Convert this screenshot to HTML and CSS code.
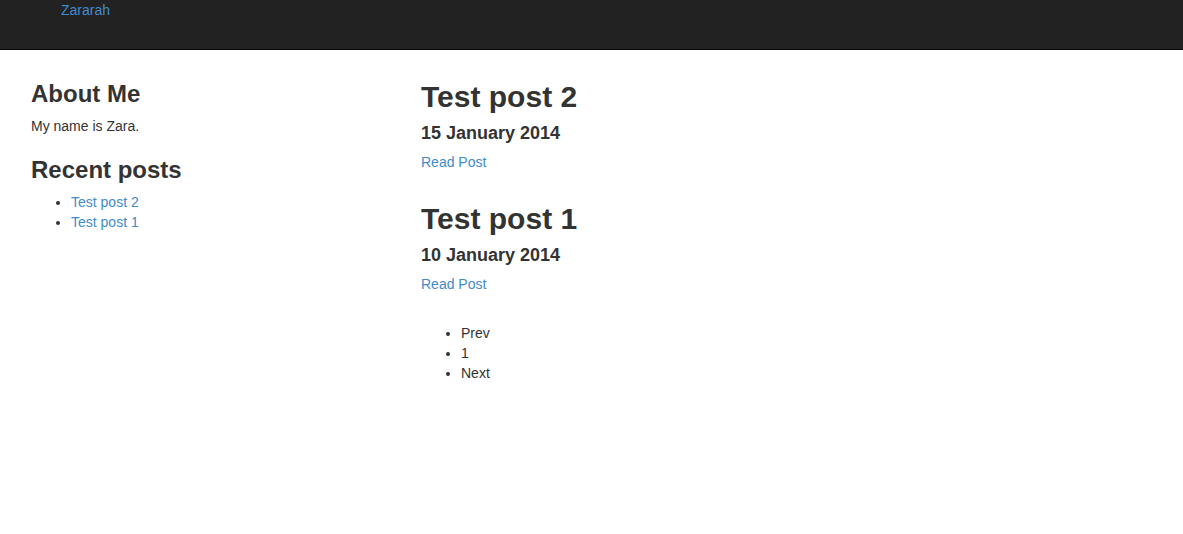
FILE: index.html
```html
<!DOCTYPE html>
<html lang="en">
<head>
<meta charset="utf-8">
<title>Zararah</title>
<link rel="stylesheet" href="styles.css">
</head>
<body>
<header class="navbar">
  <a class="brand" href="#">Zararah</a>
</header>
<div class="page">
  <aside class="sidebar">
    <h3>About Me</h3>
    <p>My name is Zara.</p>
    <h3>Recent posts</h3>
    <ul>
      <li><a href="#">Test post 2</a></li>
      <li><a href="#">Test post 1</a></li>
    </ul>
  </aside>
  <main class="content">
    <article class="post">
      <h2>Test post 2</h2>
      <h4>15 January 2014</h4>
      <p><a href="#">Read Post</a></p>
    </article>
    <article class="post">
      <h2>Test post 1</h2>
      <h4>10 January 2014</h4>
      <p><a href="#">Read Post</a></p>
    </article>
    <ul class="pager">
      <li>Prev</li>
      <li>1</li>
      <li>Next</li>
    </ul>
  </main>
</div>
</body>
</html>
```
FILE: styles.css
```css
html, body {
  margin: 0;
  padding: 0;
}
body {
  font-family: "Liberation Sans", Arial, Helvetica, sans-serif;
  font-size: 14px;
  line-height: 20px;
  color: #333333;
  background: #ffffff;
}
a {
  color: #428bca;
  text-decoration: none;
}
.navbar {
  height: 49px;
  background: #222222;
  border-bottom: 1px solid #080808;
  padding-left: 61px;
}
.brand {
  display: inline-block;
  line-height: 20px;
}
.page {
  display: grid;
  grid-template-columns: 390px 1fr;
  padding: 10px 0 0 31px;
}
.sidebar, .content {
  display: flow-root;
}
h2, h3, h4 {
  font-weight: bold;
  line-height: 1.1;
  color: #333333;
}
h3 {
  font-size: 24px;
  margin: 21px 0 9px;
}
.sidebar h3 + ul {
  margin-top: -1px;
}
p {
  margin: 0 0 10px;
}
ul {
  margin: 0 0 10px;
  padding-left: 40px;
}
.post {
  margin-bottom: 30px;
}
.post h2 {
  font-size: 30px;
  margin: 20px 0 11px;
}
.post h4 {
  font-size: 18px;
  margin: 10px 0 8px;
}
.post p {
  margin: 0;
}
.pager {
  margin-top: -1px;
}
```
